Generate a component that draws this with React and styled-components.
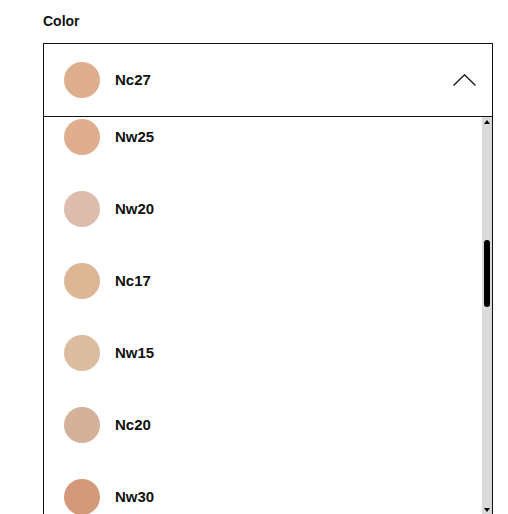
import React, { useLayoutEffect, useRef } from "react";
import styled, { createGlobalStyle } from "styled-components";

const Global = createGlobalStyle`
  html, body { margin: 0; padding: 0; background: #fff; overflow: hidden; }
  body { font-family: "Liberation Sans", Arial, sans-serif; color: #111; }
`;

const Page = styled.div`
  padding: 13px 16px 0 43px;
  width: 450px;
`;

const Label = styled.div`
  font-size: 14px;
  font-weight: 700;
  line-height: 16px;
  margin-bottom: 14px;
  color: #111;
`;

const Select = styled.div`
  border: 1px solid #111;
  width: 448px;
`;

const Header = styled.div`
  display: flex;
  align-items: center;
  height: 72px;
  padding: 0 16px 0 20px;
  border-bottom: 1px solid #111;
`;

const Swatch = styled.span`
  width: 36px;
  height: 36px;
  border-radius: 50%;
  flex: none;
  background: ${(p) => p.$color};
`;

const Name = styled.span`
  margin-left: 15px;
  font-size: 15px;
  font-weight: 700;
  line-height: 16px;
  padding-bottom: 1px;
  color: #111;
  flex: 1;
`;

const Chevron = styled.svg`
  flex: none;
  width: 23px;
  height: 12px;
`;

const ListArea = styled.div`
  display: flex;
  height: 398px;
`;

const Options = styled.div`
  flex: 1;
  overflow: hidden;
`;

const Row = styled.div`
  display: flex;
  align-items: center;
  height: 72px;
  padding: 0 20px;
`;

const Scrollbar = styled.div`
  flex: none;
  width: 10px;
  display: flex;
  flex-direction: column;
  background: #dadada;
`;

const ArrowButton = styled.div`
  flex: none;
  height: 10px;
  display: flex;
  align-items: center;
  justify-content: center;
`;

const Rail = styled.div`
  flex: 1;
  display: flex;
  flex-direction: column;
  align-items: center;
`;

const Thumb = styled.div`
  width: 6px;
  height: 67px;
  border-radius: 3px;
  background: #000;
  margin-top: ${(p) => p.$offset}px;
`;

const shades = [
  ["Nc10", "#e8c9b0"], ["Nw10", "#e6c4ae"], ["Nc12", "#e4c3a6"], ["Nw13", "#e2bfa8"],
  ["Nc13", "#e1bea0"], ["Nw17", "#dfb9a2"], ["Nc15", "#deb99a"], ["Nw22", "#dab29a"],
  ["Nc27", "#dfae8f"], ["Nw25", "#dfae8f"], ["Nw20", "#dcbcad"], ["Nc17", "#ddb795"],
  ["Nw15", "#dcbc9f"], ["Nc20", "#d5b09b"], ["Nw30", "#d39a7a"], ["Nc30", "#d4a27f"],
  ["Nw33", "#cf9574"], ["Nc35", "#cd9a74"], ["Nw35", "#c98d6b"], ["Nc37", "#c79169"],
  ["Nw40", "#c28563"], ["Nc40", "#c08a60"], ["Nw43", "#b97c5a"], ["Nc42", "#b88055"],
  ["Nw45", "#ae7050"], ["Nc45", "#ad764c"], ["Nw50", "#9f6545"], ["Nc50", "#a06a42"],
  ["Nw55", "#8e5a3d"], ["Nc55", "#8c5b38"], ["Nw60", "#784a32"],
];

export default function App() {
  const ref = useRef(null);
  useLayoutEffect(() => {
    if (ref.current) ref.current.scrollTop = 9 * 72 + 16;
  }, []);
  return (
    <>
      <Global />
      <Page>
        <Label>Color</Label>
        <Select>
          <Header>
            <Swatch $color="#dfae8f" />
            <Name>Nc27</Name>
            <Chevron viewBox="0 0 23 12">
              <polyline points="0.5,11.5 11.5,0.8 22.5,11.5" fill="none" stroke="#111" strokeWidth="1.3" />
            </Chevron>
          </Header>
          <ListArea>
            <Options ref={ref}>
              {shades.map(([n, c]) => (
                <Row key={n}>
                  <Swatch $color={c} />
                  <Name>{n}</Name>
                </Row>
              ))}
            </Options>
            <Scrollbar>
              <ArrowButton>
                <svg width="6" height="4" viewBox="0 0 6 4"><polygon points="0,4 3,0 6,4" fill="#000" /></svg>
              </ArrowButton>
              <Rail>
                <Thumb $offset={113} />
              </Rail>
              <ArrowButton>
                <svg width="6" height="4" viewBox="0 0 6 4"><polygon points="0,0 6,0 3,4" fill="#000" /></svg>
              </ArrowButton>
            </Scrollbar>
          </ListArea>
        </Select>
      </Page>
    </>
  );
}
